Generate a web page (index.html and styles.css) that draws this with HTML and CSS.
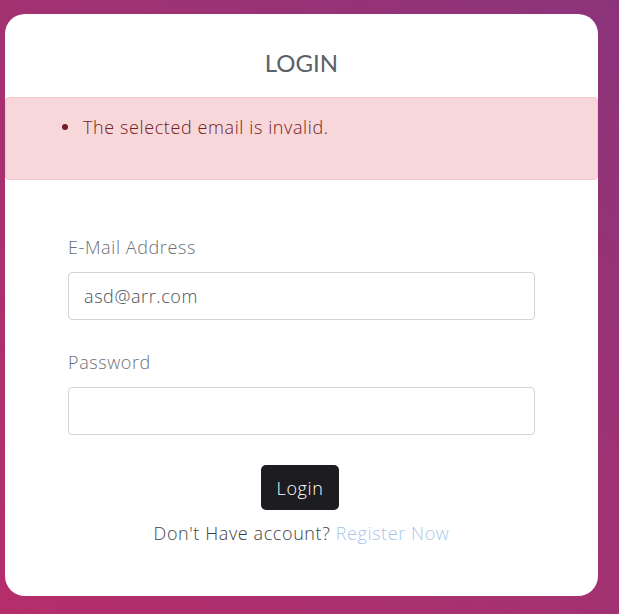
FILE: index.html
```html
<!DOCTYPE html>
<html lang="en">
<head>
<meta charset="utf-8">
<title>Login</title>
<link rel="stylesheet" href="styles.css">
</head>
<body>
<main class="card">
  <h1 class="title">LOGIN</h1>
  <div class="alert">
    <ul class="alert-list">
      <li class="alert-item">The selected email is invalid.</li>
    </ul>
  </div>
  <form class="form">
    <label class="label" for="email">E-Mail Address</label>
    <input class="input" id="email" type="email" value="asd@arr.com">
    <label class="label label-second" for="password">Password</label>
    <input class="input" id="password" type="password">
    <div class="actions">
      <button class="btn" type="button">Login</button>
    </div>
    <p class="register">Don't Have account? <a class="register-link" href="#">Register Now</a></p>
  </form>
</main>
</body>
</html>
```

FILE: styles.css
```css
* { box-sizing: border-box; }
html, body { height: 100%; }
body {
  margin: 0;
  padding: 14px 21px 0 5px;
  background: linear-gradient(to top right, #b52e6b 0%, #a33272 50%, #8c347b 100%);
  font-family: "Open Sans", Lato, sans-serif;
  letter-spacing: 0.6px;
  overflow: hidden;
}
.card {
  width: 593px;
  height: 582px;
  background: #fff;
  border-radius: 20px;
  padding-top: 34px;
}
.title {
  margin: 0;
  text-align: center;
  font-family: Lato, sans-serif;
  letter-spacing: 0;
  font-size: 24px;
  line-height: 29px;
  font-weight: 400;
  color: #5a6168;
}
.alert {
  margin-top: 20px;
  height: 83px;
  background: #f8d7da;
  border: 1px solid #f3c6cb;
  border-radius: 4px;
  color: #721c24;
  padding: 17px 20px 0 56px;
}
.alert-list {
  margin: 0;
  padding: 0;
  list-style: none;
  font-size: 18px;
  line-height: 24px;
  font-weight: 300;
}
.alert-item {
  display: flex;
  align-items: center;
  gap: 15px;
}
.alert-item::before {
  content: "";
  width: 6px;
  height: 6px;
  border-radius: 50%;
  background: #721c24;
}
.form {
  padding: 54px 63px 0;
  display: flex;
  flex-direction: column;
}
.label {
  font-size: 18px;
  line-height: 27px;
  font-weight: 300;
  color: #6c7177;
  margin-bottom: 11px;
}
.label-second { margin-top: 29px; }
.input {
  height: 48px;
  width: 100%;
  border: 1px solid #ced4da;
  border-radius: 4px;
  padding: 0 15px;
  font-family: inherit;
  letter-spacing: inherit;
  font-size: 18px;
  font-weight: 300;
  color: #495057;
  background: #fff;
}
.actions {
  margin-top: 30px;
  display: flex;
  justify-content: center;
}
.btn {
  width: 78px;
  height: 45px;
  margin-right: 3px;
  background: #1d1c21;
  color: #fff;
  border: 0;
  border-radius: 5px;
  font-family: inherit;
  letter-spacing: inherit;
  font-size: 18px;
  font-weight: 300;
}
.register {
  margin: 10px 0 0;
  text-align: center;
  font-size: 18px;
  line-height: 27px;
  font-weight: 300;
  color: #3f3f44;
}
.register-link {
  color: #a9c7ea;
  text-decoration: none;
}
```
